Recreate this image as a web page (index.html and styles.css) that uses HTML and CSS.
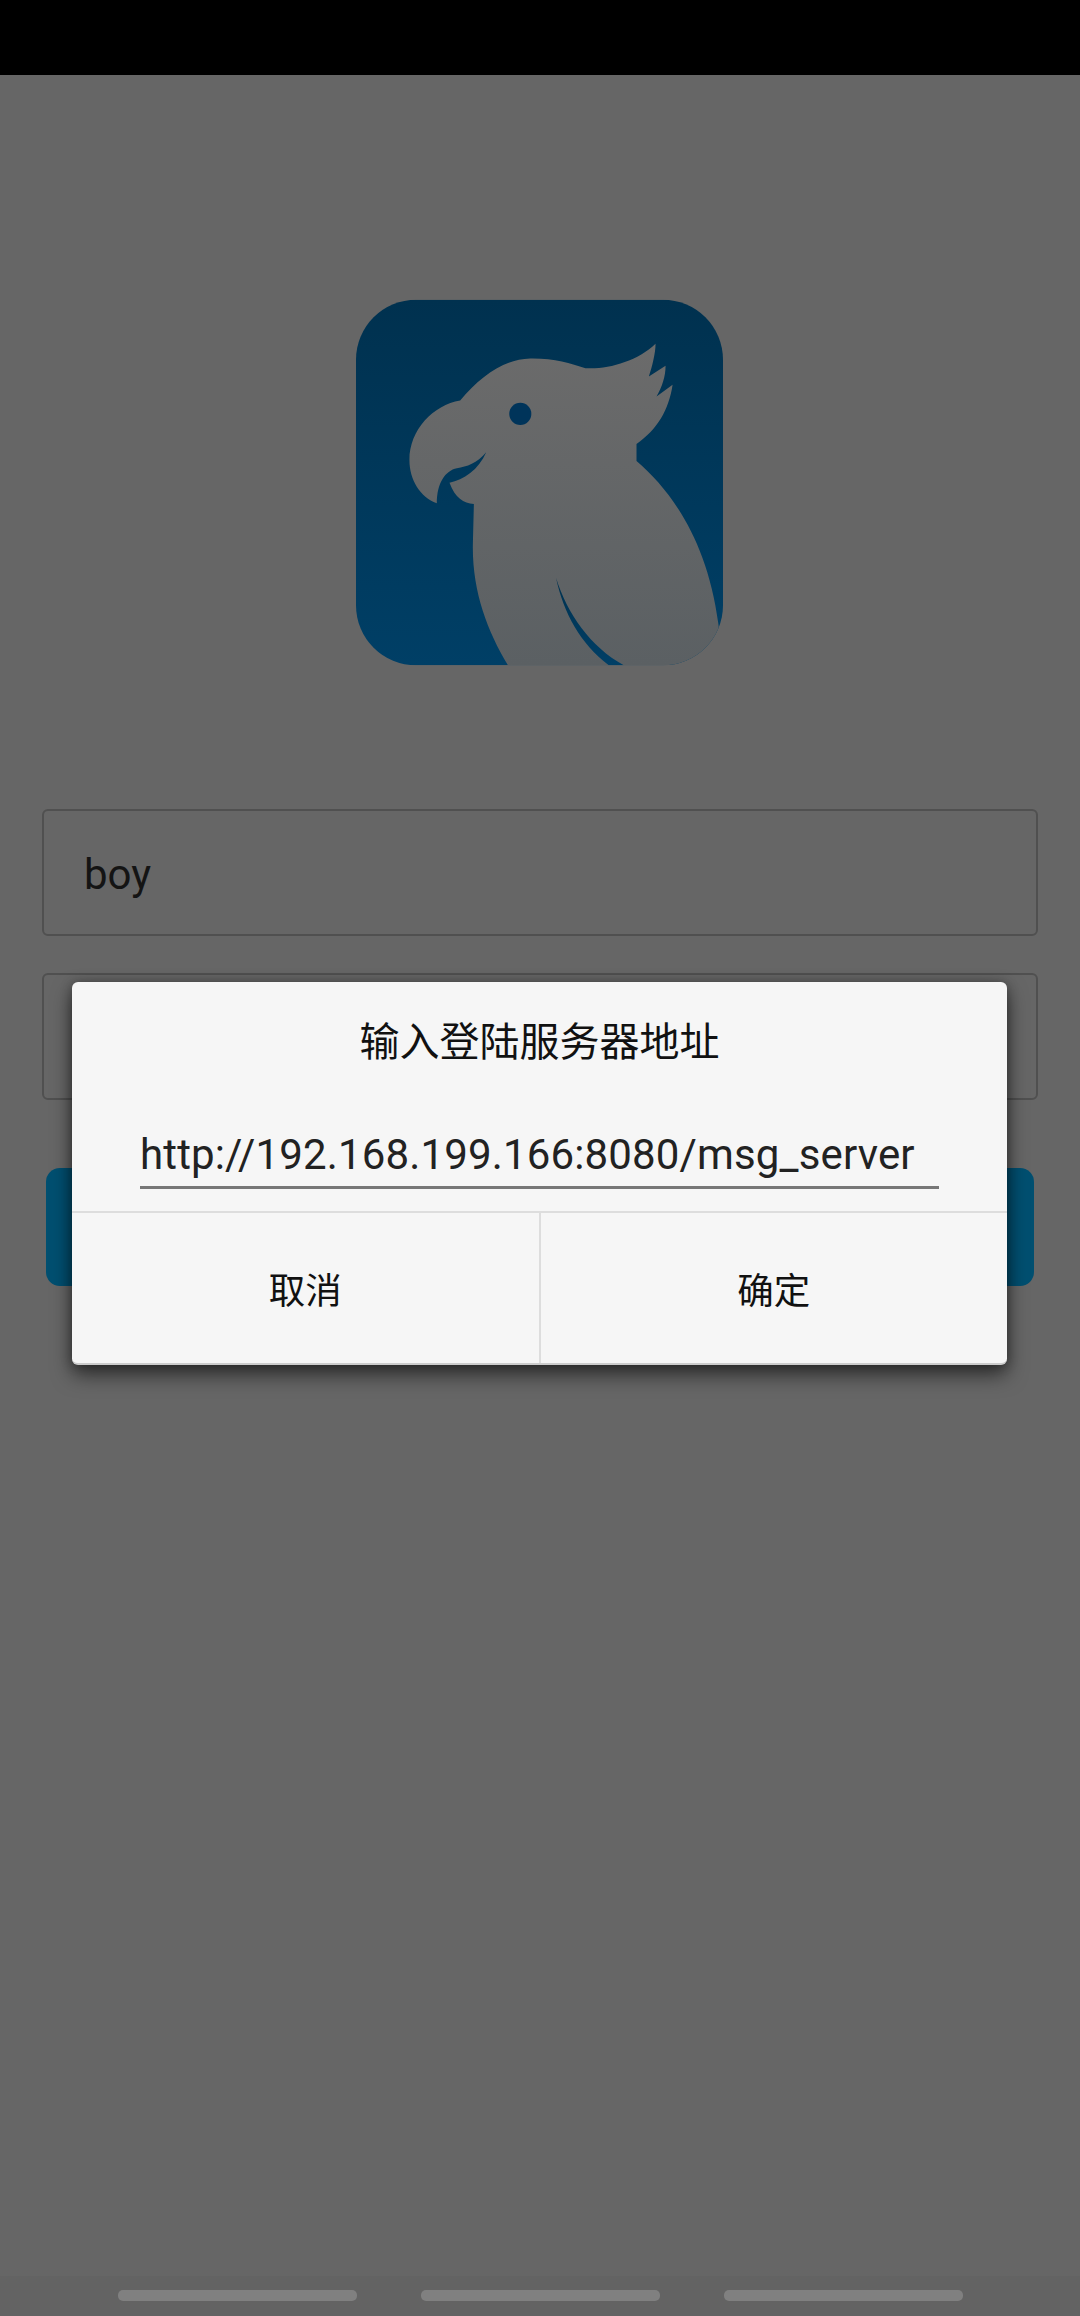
FILE: index.html
```html
<!DOCTYPE html>
<html lang="zh-CN">
<head>
    <meta charset="UTF-8">
    <meta name="viewport" content="width=device-width, initial-scale=1.0">
    <title>登录</title>
    <link rel="stylesheet" href="styles.css">
</head>
<body>
    <div class="status-bar"></div>

    <div class="screen">
        <div class="login">
            <svg class="logo" viewBox="48 60 1099 1095" xmlns="http://www.w3.org/2000/svg">
                <defs>
                    <linearGradient id="logoBg" x1="0" y1="0" x2="0" y2="1">
                        <stop offset="0" stop-color="#00314f"/>
                        <stop offset="1" stop-color="#003f66"/>
                    </linearGradient>
                    <linearGradient id="birdFill" x1="0" y1="0" x2="0" y2="1">
                        <stop offset="0" stop-color="#6b6b6b"/>
                        <stop offset="1" stop-color="#5b6063"/>
                    </linearGradient>
                    <clipPath id="logoClip">
                        <rect x="48" y="60" width="1099" height="1095" rx="180"/>
                    </clipPath>
                </defs>
                <g clip-path="url(#logoClip)">
                    <rect x="48" y="60" width="1099" height="1095" fill="url(#logoBg)"/>
                    <path fill="url(#birdFill)" d="M503 1155C440 1050 395 930 398 790L401 672C370 668 345 655 328 608C370 600 415 570 438 517C410 550 380 560 350 565C315 572 290 610 290 670C240 650 208 600 208 540C208 450 280 375 360 362C420 290 490 238 570 236C640 235 690 250 735 265C800 270 890 245 945 192C945 220 935 260 925 290L975 258C975 290 965 320 948 350L996 315C985 390 950 450 888 492L888 543C990 630 1100 780 1133 1030L1147 1155Z"/>
                    <path fill="url(#logoBg)" d="M647 893C680 1000 750 1100 850 1155L805 1155C720 1090 670 1000 647 893Z"/>
                    <circle cx="540" cy="402" r="33" fill="#00345a"/>
                </g>
            </svg>
            <div class="field">boy</div>
            <div class="field field-second"></div>
            <div class="login-btn"></div>
        </div>

        <div class="dialog-layer">
            <div class="dialog">
                <div class="dialog-title">输入登陆服务器地址</div>
                <div class="dialog-input">http://192.168.199.166:8080/msg_server</div>
                <div class="dialog-actions">
                    <div class="dialog-btn">取消</div>
                    <div class="dialog-btn">确定</div>
                </div>
            </div>
        </div>
    </div>

    <div class="nav-bar">
        <div class="nav-pill"></div>
        <div class="nav-pill"></div>
        <div class="nav-pill"></div>
    </div>
</body>
</html>
```

FILE: styles.css
```css
html, body {
    height: 100%;
}
body {
    margin: 0;
    display: flex;
    flex-direction: column;
    background-color: #666;
    font-family: Roboto, "Noto Sans CJK SC", sans-serif;
    overflow: hidden;
}
.status-bar {
    height: 75px;
    background-color: #000;
}
.screen {
    position: relative;
    flex: 1;
}
.login {
    display: flex;
    flex-direction: column;
    align-items: center;
    padding-top: 224px;
}
.logo {
    display: block;
    width: 367px;
    height: 367px;
    margin: 0 1px 143px 0;
}
.field {
    box-sizing: border-box;
    width: 996px;
    height: 127px;
    padding: 4px 40px 0;
    border: 2px solid #505050;
    border-radius: 6px;
    color: #141414;
    font-size: 42px;
    line-height: 120px;
}
.field-second {
    margin-top: 37px;
}
.login-btn {
    width: 988px;
    height: 118px;
    margin-top: 68px;
    border-radius: 14px;
    background-color: #004f70;
}
.dialog-layer {
    position: absolute;
    top: 0;
    left: 0;
    right: 0;
    bottom: 0;
    display: flex;
    justify-content: center;
    align-items: flex-start;
    padding: 907px 1px 0 0;
}
.dialog {
    box-sizing: border-box;
    width: 935px;
    height: 383px;
    border-bottom: 2px solid #ccc;
    border-radius: 6px;
    background-color: #f6f6f6;
    box-shadow: 0 10px 20px rgba(0, 0, 0, 0.55), 0 0 12px rgba(0, 0, 0, 0.3);
}
.dialog-title {
    height: 118px;
    padding-top: 3px;
    box-sizing: border-box;
    color: #111;
    font-size: 40px;
    line-height: 115px;
    text-align: center;
}
.dialog-input {
    height: 57px;
    margin: 0 68px 22px;
    padding-top: 29px;
    border-bottom: 3px solid #777;
    color: #222;
    font-size: 42px;
    letter-spacing: 0.15px;
    line-height: 52px;
    white-space: nowrap;
}
.dialog-actions {
    display: flex;
    height: 150px;
    border-top: 2px solid #ddd;
}
.dialog-btn {
    flex: 1;
    padding-top: 8px;
    color: #111;
    font-size: 36.5px;
    line-height: 142px;
    text-align: center;
}
.dialog-btn + .dialog-btn {
    border-left: 2px solid #ddd;
}
.nav-bar {
    display: flex;
    justify-content: center;
    gap: 64px;
    box-sizing: border-box;
    height: 40px;
    padding-top: 14px;
    background-color: #636363;
}
.nav-pill {
    width: 239px;
    height: 11px;
    border-radius: 5px;
    background-color: #808080;
}
```
